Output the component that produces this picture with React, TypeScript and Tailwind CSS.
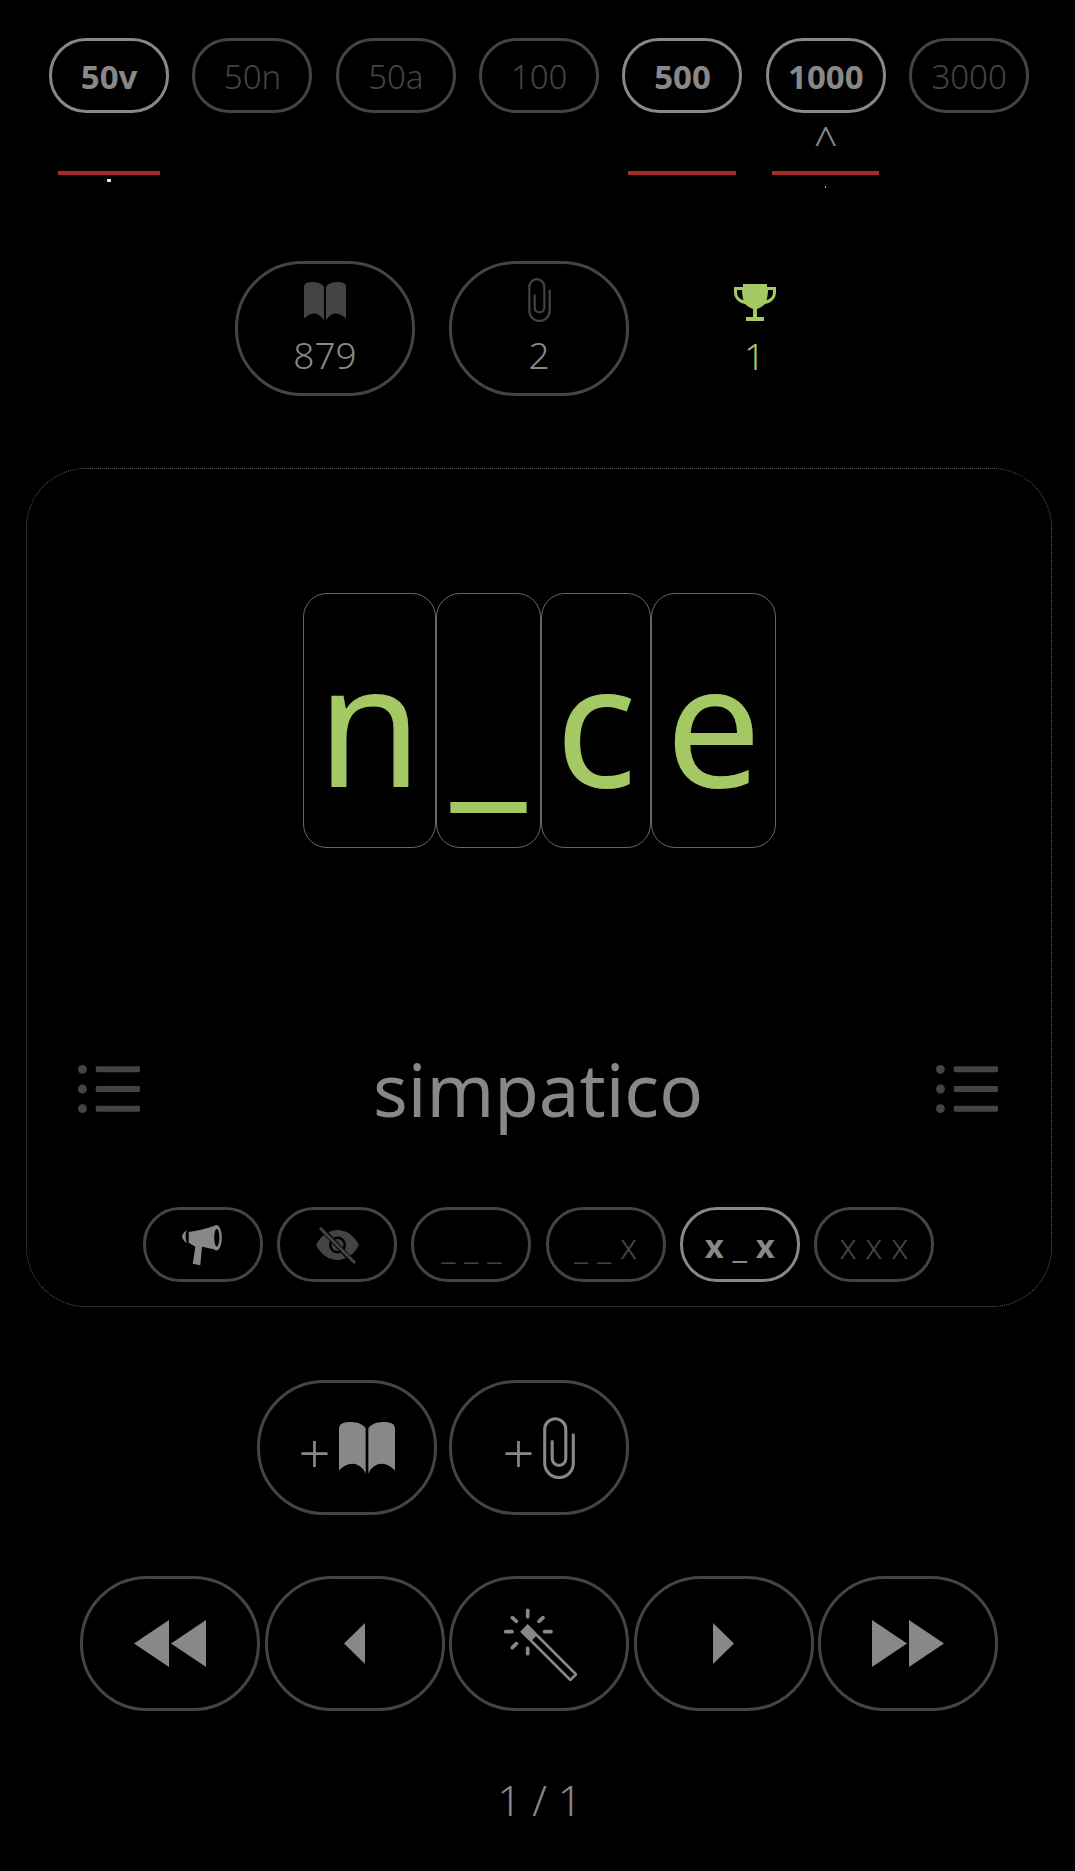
import React from "react";

const dim = "border-[3px] border-[#444] text-[#444] font-light";
const on = "border-[3px] border-[#888] text-[#888] font-bold";

function Pill({ active, children }: { active?: boolean; children: React.ReactNode }) {
  return (
    <div className={`w-[120px] h-[75px] rounded-[37px] flex items-center justify-center text-[33px] leading-none pt-[2px] ${active ? on : dim}`}>
      {children}
    </div>
  );
}

function Big({ children }: { children?: React.ReactNode }) {
  return (
    <div className="w-[180px] h-[135px] rounded-[67px] border-[3px] border-[#444] flex flex-col items-center justify-center shrink-0">
      {children}
    </div>
  );
}

function Stat({ icon, value, border }: { icon: React.ReactNode; value: string; border: boolean }) {
  return (
    <div className={`w-[180px] h-[135px] shrink-0 flex flex-col items-center ${border ? "rounded-[67px] border-[3px] border-[#444] pt-[18px] text-[#888]" : "pt-[22px] pl-[3px] text-[#a4c864]"}`}>
      <div className="h-[39px] flex items-center justify-center">{icon}</div>
      <div className={`${border ? "mt-[10px]" : "mt-[10px]"} text-[37px] leading-[48px] font-light`}>{value}</div>
    </div>
  );
}

function Book({ className }: { className: string }) {
  return (
    <svg viewBox="0 0 168 155" className={className} fill="currentColor">
      <path d="M0 20Q0 2 22 0C50-2 70 4 80 18V155C72 135 55 125 40 125C25 125 10 135 0 145Z" />
      <path d="M88 18C98 4 118-2 146 0Q168 2 168 20V145C158 135 143 125 128 125C113 125 96 135 88 155Z" />
    </svg>
  );
}

function Clip({ className }: { className: string }) {
  return (
    <svg viewBox="0 0 94 182" className={className} fill="none" stroke="currentColor" strokeWidth="9" strokeLinecap="round">
      <path d="M89 52V136A42 42 0 0 1 5 136V36A31 31 0 0 1 67 36V122A20 20 0 0 1 27 122V72" />
    </svg>
  );
}

function ListIcon() {
  return (
    <svg viewBox="0 0 63 50" className="w-[62px] h-[50px] text-[#444]" fill="currentColor">
      <circle cx="4.5" cy="5" r="4.500" />
      <circle cx="4.5" cy="25" r="4.500" />
      <circle cx="4.5" cy="45" r="4.500" />
      <rect x="18" y="2" width="45" height="6" rx="1.500" />
      <rect x="18" y="22" width="45" height="6" rx="1.500" />
      <rect x="18" y="42" width="45" height="6" rx="1.500" />
    </svg>
  );
}

function Tri({ dir, double }: { dir: "l" | "r"; double?: boolean }) {
  if (double)
    return (
      <svg viewBox="0 0 72 47" className="w-[72px] h-[47px] text-[#888]" fill="currentColor">
        {dir === "l" ? <path d="M0 23.500L35 0V47ZM37 23.500L72 0V47Z" /> : <path d="M0 0L35 23.500L0 47ZM37 0L72 23.500L37 47Z" />}
      </svg>
    );
  return (
    <svg viewBox="0 0 21 41" className="w-[21px] h-[41px] text-[#888]" fill="currentColor">
      {dir === "l" ? <path d="M0 20.500L21 0V41Z" /> : <path d="M0 0L21 20.500L0 41Z" />}
    </svg>
  );
}

function Wand() {
  return (
    <svg viewBox="35 33 225 222" className="w-[75px] h-[74px] text-[#888]" fill="none" stroke="currentColor" strokeWidth="11" strokeLinecap="round">
      <path d="M112 43V62M112 157V173M46 107H65M163 107H182M66 65L78 76M158 65L146 76M66 155L78 143" />
      <path d="M112 90L257 235L240 252L95 107Z" strokeWidth="8" strokeLinejoin="miter" strokeLinecap="butt" />
      <path d="M112 90L140 118L123 135L95 107Z" fill="currentColor" stroke="none" />
    </svg>
  );
}

function Mega() {
  return (
    <svg viewBox="0 0 40 41" className="w-[40px] h-[41px] mr-[2px]" fill="#888">
      <path d="M6.700 7C14 6 24 4 31.700 1V24.300L20 21.700L18.300 40.300L10.700 38.700L13.300 21.700L6.700 17.700Z" />
      <ellipse cx="34.300" cy="12.700" rx="5.500" ry="12.700" />
      <ellipse cx="34.800" cy="12.700" rx="2.600" ry="9" fill="#000" />
      <path d="M5 5C1 8 -1 11.500 0.500 13C1.500 15 3 17 5 18.300C3.500 15 3 9 5 5Z" />
    </svg>
  );
}

function EyeOff() {
  return (
    <svg viewBox="0 0 43 37" className="w-[43px] h-[37px]">
      <path d="M0 18C10 -2 33 -2 43 18C33 38 10 38 0 18Z" fill="#444" />
      <circle cx="21.500" cy="18" r="8.500" fill="#000" />
      <circle cx="21.500" cy="18" r="6" fill="#444" />
      <path d="M2 -2L40 38" stroke="#000" strokeWidth="5" />
      <path d="M4 1L39 36" stroke="#444" strokeWidth="3" />
    </svg>
  );
}

function Letter({ w, children }: { w: string; children: string }) {
  return (
    <div className={`${w} h-[255px] rounded-[24px] border border-[#666] flex items-center justify-center text-[170px] leading-none text-[#a4c864] shrink-0`}>
      {children}
    </div>
  );
}

function Mark({ w, caret, dot }: { w: string; caret?: boolean; dot?: string }) {
  return (
    <div className="h-[148px] flex flex-col items-center">
      <div className="h-[58px] text-[42px] leading-[58px] text-[#888] font-light">{caret ? "^" : ""}</div>
      {w && <div className={`${w} h-[4px] bg-[#a52a2a]`} />}
      {dot && <div className={dot} />}
    </div>
  );
}

export default function App() {
  const top: [string, boolean][] = [
    ["50v", true], ["50n", false], ["50a", false], ["100", false], ["500", true], ["1000", true], ["3000", false],
  ];
  return (
    <div className="w-[1075px] h-[1871px] bg-black overflow-hidden antialiased font-['Noto_Sans',sans-serif]">
      <div className="pt-[38px] pl-[37.5px] grid grid-cols-[repeat(7,143.33px)] justify-items-center">
        {top.map(([t, a]) => (
          <Pill key={t} active={a}>{t}</Pill>
        ))}
        <Mark w="w-[102px]" dot="mt-[4px] w-[4px] h-[3px] bg-[#f5deb3]" />
        <Mark w="" />
        <Mark w="" />
        <Mark w="" />
        <Mark w="w-[108px]" />
        <Mark w="w-[107px]" caret dot="mt-[11px] w-[1px] h-[2px] bg-[#a4c864]" />
        <Mark w="" />
      </div>
      <div className="pl-[235px] flex gap-[34px]">
        <Stat border value="879" icon={<Book className="w-[42px] h-[39px] text-[#444]" />} />
        <Stat border value="2" icon={<Clip className="w-[23px] h-[44px] mb-[4px] text-[#444]" />} />
        <Stat
          border={false}
          value="1"
          icon={
            <svg viewBox="0 0 42 38" className="w-[42px] h-[38px]" fill="currentColor">
              <path d="M9 0H33V3H42V8C42 15 37 19 31 20C28 23 25 24 23 25V33H30V37H12V33H19V25C17 24 14 23 11 20C5 19 0 15 0 8V3H9ZM3 6V8C3 12 5 15 9.500 16C8.500 13 8 9 8 6ZM39 6H34C34 9 33.500 13 32.500 16C37 15 39 12 39 8Z" />
            </svg>
          }
        />
      </div>
      <div className="mt-[72px] ml-[26px] w-[1026px] h-[839px] rounded-[60px] border border-dotted border-[#5a5a5a] flex flex-col">
        <div className="mt-[124px] pl-[276px] flex">
          <Letter w="w-[133px]">n</Letter>
          <Letter w="w-[105px]">_</Letter>
          <Letter w="w-[110px]">c</Letter>
          <Letter w="w-[125px]">e</Letter>
        </div>
        <div className="mt-[201px] pl-[51px] pr-[53px] flex items-center justify-between h-[80px]">
          <ListIcon />
          <div className="text-[72.5px] leading-none text-[#888]">simpatico</div>
          <ListIcon />
        </div>
        <div className="mt-[78px] pl-[116px] flex gap-[14.2px]">
          <Pill><Mega /></Pill>
          <Pill><EyeOff /></Pill>
          <Pill><span className="text-[34px]">_ _ _</span></Pill>
          <Pill><span className="text-[34px]">_ _ x</span></Pill>
          <Pill active><span className="text-[33px]">x <span className="font-normal">_</span> x</span></Pill>
          <Pill><span className="text-[34px]">x x x</span></Pill>
        </div>
      </div>
      <div className="mt-[73px] pl-[257px] flex gap-[12px] text-[#888]">
        <Big>
          <div className="flex items-center gap-[9px]">
            <span className="text-[56px] leading-none font-light mt-[6px]">+</span>
            <Book className="w-[56px] h-[52px]" />
          </div>
        </Big>
        <Big>
          <div className="flex items-center gap-[9px]">
            <span className="text-[56px] leading-none font-light mt-[6px]">+</span>
            <Clip className="w-[32px] h-[62px]" />
          </div>
        </Big>
      </div>
      <div className="mt-[61px] pl-[80px] flex gap-[4.6px]">
        <Big><Tri dir="l" double /></Big>
        <Big><Tri dir="l" /></Big>
        <Big><Wand /></Big>
        <Big><Tri dir="r" /></Big>
        <Big><Tri dir="r" double /></Big>
      </div>
      <div className="mt-[63px] pl-[4px] text-center text-[42px] leading-[52px] text-[#888] font-light">1 / 1</div>
    </div>
  );
}
